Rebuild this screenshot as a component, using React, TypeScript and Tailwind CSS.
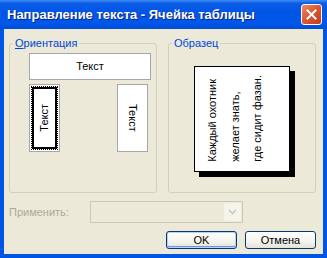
import React from "react";

const VerticalText = ({ up, children }: { up?: boolean; children: React.ReactNode }) => (
  <span
    className={`[writing-mode:vertical-rl] whitespace-nowrap leading-[13px] ${
      up ? "rotate-180" : ""
    }`}
  >
    {children}
  </span>
);

const XpButton = ({ label, primary }: { label: string; primary?: boolean }) => (
  <div
    className={`w-[71px] h-[18px] rounded-[3px] border border-[#003C74] flex items-center justify-center bg-[linear-gradient(180deg,#FFFFFF_0%,#F4F3EE_60%,#E3E1D7_100%)] ${
      primary ? "shadow-[inset_0_0_0_1px_#B9D1FA,inset_0_-1px_0_1px_#6D92E6]" : ""
    }`}
  >
    <span className="text-[11px] leading-[13px] text-black">{label}</span>
  </div>
);

const App = () => {
  return (
    <div className="w-[327px] h-[258px] flex flex-col bg-[#0055E5] font-['Liberation_Sans',Arial,sans-serif] select-none">
      {/* title bar */}
      <div className="h-[29px] shrink-0 flex items-center justify-between pl-[7px] pr-[5px] bg-[linear-gradient(180deg,#3D8CF5_0%,#0A5CE6_12%,#0055E5_45%,#0058EA_80%,#004CD6_100%)]">
        <span className="text-white font-bold text-[13px] leading-[16px] [text-shadow:1px_1px_0_#0A1F80]">
          Направление текста - Ячейка таблицы
        </span>
        <div className="w-[21px] h-[21px] rounded-[3px] border border-white flex items-center justify-center bg-[linear-gradient(135deg,#EC8B6A_0%,#DB5530_50%,#C23E17_100%)]">
          <svg width="11" height="11" viewBox="0 0 11 11">
            <path d="M1.5 1.5 L9.5 9.5 M9.5 1.5 L1.5 9.5" stroke="white" strokeWidth="2" strokeLinecap="square" />
          </svg>
        </div>
      </div>

      {/* body */}
      <div className="flex-1 mx-[4px] mb-[4px] bg-[#ECE9D8] flex flex-col pl-[5px] pr-[7px] pt-[8px] text-[11px] text-black">
        <div className="flex gap-[11px]">
          <fieldset className="w-[148px] h-[156px] m-0 p-0 border border-[#D0D0BF] rounded-[3px]">
            <legend className="ml-[3px] px-[2px] text-[#0046D5] leading-[13px]">
              <span className="underline">О</span>риентация
            </legend>
            <div className="pl-[19px] pt-[3px] flex flex-col">
              <div className="w-[122px] h-[27px] bg-white border border-[#A7A6AA] flex items-center justify-center">
                Текст
              </div>
              <div className="w-[119px] mt-[4px] flex justify-between">
                <div className="w-[31px] h-[68px] bg-white border border-[#A7A6AA] p-px">
                  <div className="w-full h-full border border-dotted border-black">
                    <div className="w-full h-full border-2 border-black flex items-center justify-center">
                      <VerticalText up>Текст</VerticalText>
                    </div>
                  </div>
                </div>
                <div className="w-[31px] h-[68px] bg-white border border-[#A7A6AA] flex items-center justify-center">
                  <VerticalText>Текст</VerticalText>
                </div>
              </div>
            </div>
          </fieldset>

          <fieldset className="w-[148px] h-[156px] m-0 p-0 border border-[#D0D0BF] rounded-[3px]">
            <legend className="ml-[3px] px-[2px] text-[#0046D5] leading-[13px]">Образец</legend>
            <div className="pl-[25px] pt-[16px]">
              <div className="w-[96px] h-[106px] bg-white border border-black shadow-[5px_5px_0_#000] flex items-end pl-[6px] pb-[9px]">
                <span className="[writing-mode:vertical-rl] rotate-180 whitespace-nowrap leading-[22.5px]">
                  Каждый охотник
                  <br />
                  желает знать,
                  <br />
                  где сидит фазан.
                </span>
              </div>
            </div>
          </fieldset>
        </div>

        <div className="mt-[8px] flex items-center">
          <span className="w-[81px] text-[#ACA899]">Применить:</span>
          <div className="w-[153px] h-[22px] border border-[#C9C7BA] bg-[#ECE9D8] flex justify-end p-px">
            <div className="w-[17px] h-full bg-[#F5F4EA] rounded-[2px] flex items-center justify-center">
              <svg width="9" height="6" viewBox="0 0 9 6">
                <path d="M1 1 L4.5 4.5 L8 1" fill="none" stroke="#C9C7BA" strokeWidth="1.6" />
              </svg>
            </div>
          </div>
        </div>

        <div className="mt-[8px] flex justify-end gap-[8px]">
          <XpButton label="OK" primary />
          <XpButton label="Отмена" />
        </div>
      </div>
    </div>
  );
};

export default App;
